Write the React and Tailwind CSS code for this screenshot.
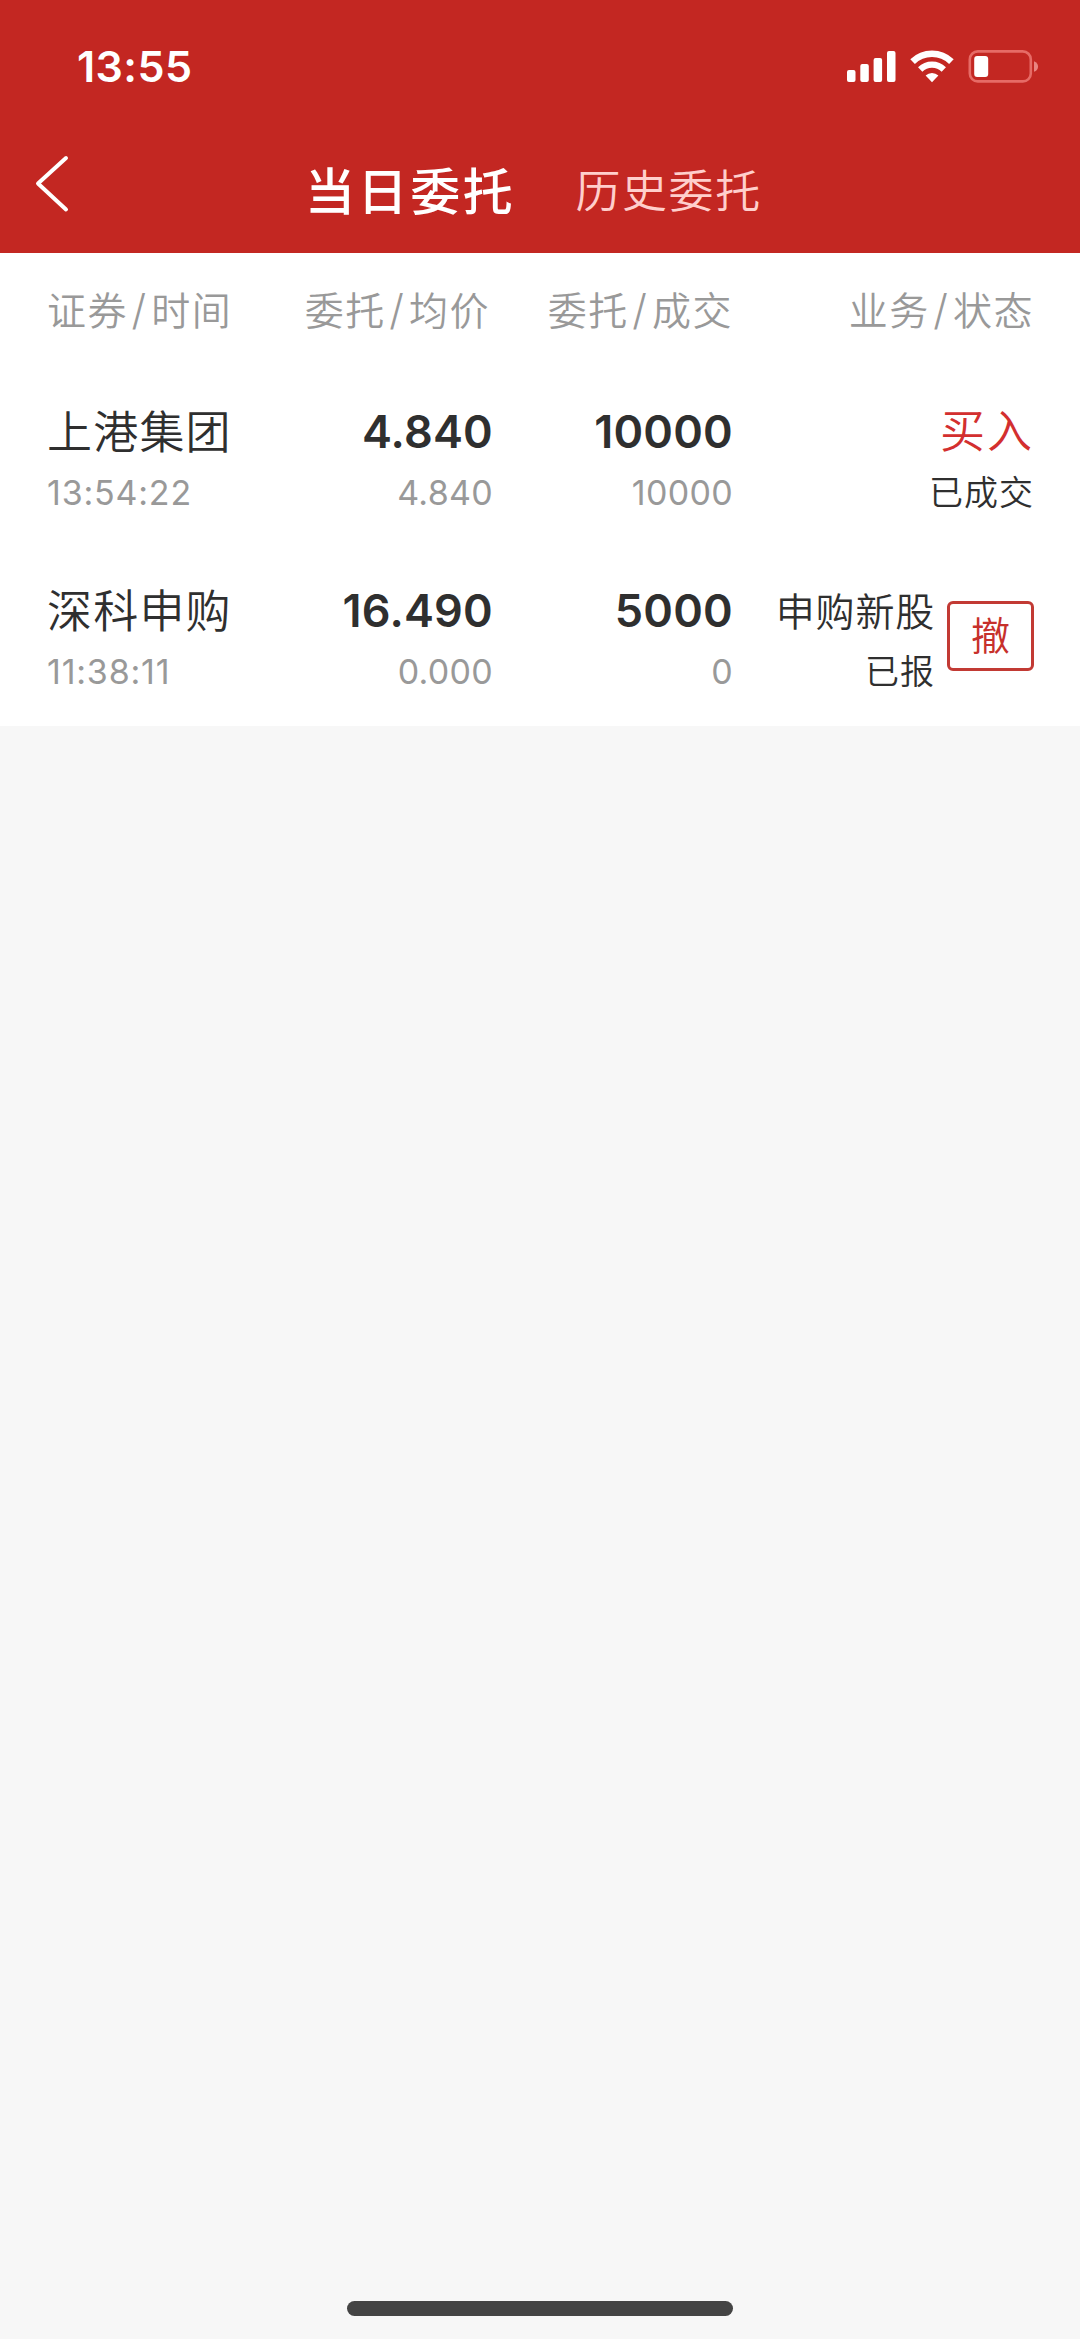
const columns = [
  ['证券', '时间'],
  ['委托', '均价'],
  ['委托', '成交'],
  ['业务', '状态'],
]

const orders = [
  {
    id: 1,
    name: '上港集团',
    time: '13:54:22',
    price: '4.840',
    avgPrice: '4.840',
    amount: '10000',
    filled: '10000',
    type: '买入',
    status: '已成交',
    isBuy: true,
  },
  {
    id: 2,
    name: '深科申购',
    time: '11:38:11',
    price: '16.490',
    avgPrice: '0.000',
    amount: '5000',
    filled: '0',
    type: '申购新股',
    status: '已报',
    canCancel: true,
  },
]

const bigNumber = 'text-[45px] leading-[62px] font-semibold tracking-[0.2px] text-[#2f2f2f]'
const smallNumber = 'text-[34px] leading-[59px] tracking-[0.3px] text-[#999]'

function StatusBar() {
  return (
    <div className="flex h-[133px] items-start justify-between pl-[77px] pr-[41px] pt-[50px] text-white">
      <span className="text-[43px] leading-[33px] font-semibold tracking-[0.4px]">13:55</span>
      <div className="flex items-start">
        <svg className="h-[33px] w-[49px]" viewBox="0 0 49 33" fill="currentColor">
          <rect x="0" y="20" width="8.5" height="12" rx="2" />
          <rect x="13.3" y="14" width="8.5" height="18" rx="2" />
          <rect x="26.6" y="8" width="8.5" height="24" rx="2" />
          <rect x="40" y="1" width="8.5" height="31" rx="2" />
        </svg>
        <svg className="ml-[14px] h-[33px] w-[44px]" viewBox="0 0 44 33" fill="none" stroke="currentColor">
          <path d="M2.6 11.6A28 28 0 0 1 41.4 11.6" strokeWidth="6.6" />
          <path d="M10.2 19.4A17 17 0 0 1 33.8 19.4" strokeWidth="6.2" />
          <path d="M15.6 25.6A9.2 9.2 0 0 1 28.4 25.6L22 32.2Z" fill="currentColor" stroke="none" />
        </svg>
        <svg className="ml-[14px] h-[33px] w-[71px]" viewBox="0 0 71 33" fill="currentColor">
          <rect x="1.8" y="1.4" width="61" height="30" rx="8" fill="none" stroke="#e66b66" strokeWidth="2.6" />
          <rect x="6.2" y="6" width="14" height="21" rx="3" />
          <path d="M66 11.2C71.4 13 71.4 20 66 21.8Z" fill="#e98581" />
        </svg>
      </div>
    </div>
  )
}

function Tabs() {
  return (
    <nav className="flex h-[120px] items-start pl-[34px]">
      <button type="button" className="mt-[22px]">
        <svg className="h-[58px] w-[36px]" viewBox="0 0 36 58" fill="none" stroke="#fff" strokeWidth="4" strokeLinecap="round" strokeLinejoin="round">
          <path d="M32 3L4 28.5L32 54.5" />
        </svg>
      </button>
      <button type="button" className="ml-[235px] mt-[24px] text-[50px] leading-[70px] font-medium tracking-[2.6px] text-white">
        当日委托
      </button>
      <button type="button" className="ml-[60px] mt-[24px] text-[45px] leading-[70px] font-[350] tracking-[1.6px] text-[#ffcfcc]">
        历史委托
      </button>
    </nav>
  )
}

function OrderRow({ order }) {
  return (
    <div className="grid h-[178.5px] grid-cols-[246px_200px_240px_301px] pl-[47px] pt-[24px]">
      <div>
        <p className="pt-px text-[45px] leading-[61px] font-[350] tracking-[1.2px] text-[#2f2f2f]">{order.name}</p>
        <p className="text-[34px] leading-[59px] tracking-[0.8px] text-[#999]">{order.time}</p>
      </div>
      <div className="text-right">
        <p className={bigNumber}>{order.price}</p>
        <p className={smallNumber}>{order.avgPrice}</p>
      </div>
      <div className="text-right">
        <p className={bigNumber}>{order.amount}</p>
        <p className={smallNumber}>{order.filled}</p>
      </div>
      <div className="flex justify-end">
        <div className="text-right font-[350] text-[#2f2f2f]">
          <p
            className={
              order.isBuy
                ? 'text-[45px] leading-[62px] tracking-[2px] text-[#d32f2f]'
                : 'pt-[2px] text-[39px] leading-[60px] tracking-[0.8px]'
            }
          >
            {order.type}
          </p>
          <p className="text-[34px] leading-[59px] tracking-[1px]">{order.status}</p>
        </div>
        {order.canCancel && (
          <button
            type="button"
            className="ml-[12px] mt-[21px] h-[70px] w-[87px] rounded-[6px] border-3 border-[#c23a34] text-[39px] leading-[60px] font-[350] text-[#c7302b]"
          >
            撤
          </button>
        )}
      </div>
    </div>
  )
}

export default function App() {
  return (
    <div className="flex h-[2339px] w-[1080px] flex-col bg-[#f7f7f7] font-['Inter','Noto_Sans_CJK_SC',sans-serif]">
      <header className="h-[253px] bg-[#c32722]">
        <StatusBar />
        <Tabs />
      </header>

      <main className="h-[473px] bg-white">
        <div className="grid h-[124px] grid-cols-[243px_200px_243px_301px] pl-[47px] pt-[28px] text-[39px] leading-[60px] font-[350] tracking-[1.5px] text-[#999]">
          {columns.map(([top, bottom], i) => (
            <span key={i} className={i === 0 ? '' : 'text-right'}>
              {top}
              <span className="mx-[3.5px] text-[42px] leading-none">/</span>
              {bottom}
            </span>
          ))}
        </div>
        {orders.map((order) => (
          <OrderRow key={order.id} order={order} />
        ))}
      </main>

      <div className="mx-auto mt-auto mb-[23px] h-[15px] w-[386px] rounded-full bg-[#444]" />
    </div>
  )
}
